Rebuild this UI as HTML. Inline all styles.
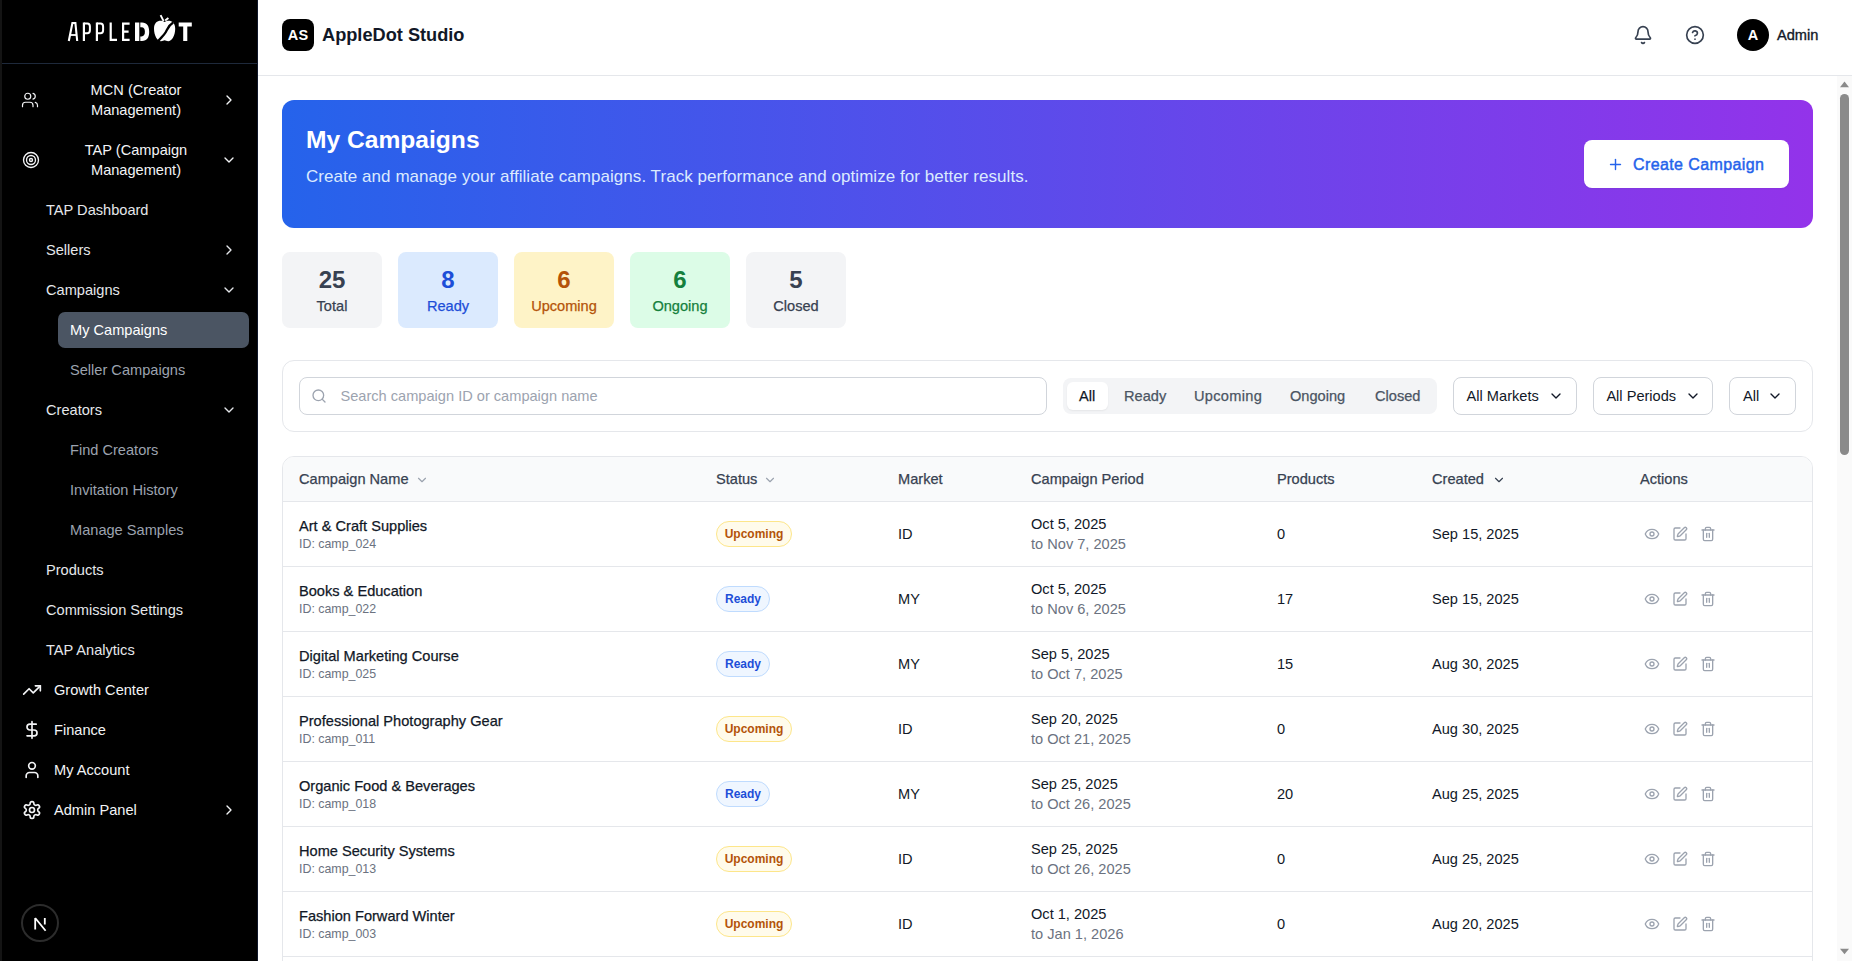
<!DOCTYPE html>
<html><head><meta charset="utf-8">
<style>
*{box-sizing:border-box;margin:0;padding:0}
html,body{width:1852px;height:961px;overflow:hidden;background:#fff;font-family:"Liberation Sans",sans-serif;}
.abs{position:absolute}
#sb{position:absolute;left:0;top:0;width:258px;height:961px;background:#000;border-right:1px solid #0f172a}
#sb .edge{position:absolute;left:0;top:0;width:2px;height:961px;background:#141414}
#sb .logoline{position:absolute;left:2px;top:63px;width:255px;height:1px;background:#1e293b}
.ni{position:absolute;height:40px;line-height:40px;font-size:14.6px;white-space:nowrap}
.l1{color:#f3f4f6}
.l2{color:#e5e7eb}
.l3{color:#9ca3af}
.ic{position:absolute;fill:none;stroke:currentColor;stroke-linecap:round;stroke-linejoin:round}
#hdr{position:absolute;left:258px;top:0;width:1594px;height:76px;background:#fff;border-bottom:1px solid #e5e7eb}
#main{position:absolute;left:258px;top:76px;width:1594px;height:885px;background:#fff}
#scroll{position:absolute;left:1837px;top:76px;width:15px;height:885px;background:#fafafa}

.banner{background:linear-gradient(90deg,#2563eb 0%,#9333ea 100%);border-radius:12px}
.stat{position:absolute;top:252px;width:100px;height:76px;border-radius:8px;text-align:center}
.stat .sn{position:absolute;left:0;width:100px;top:12px;font-size:24px;line-height:32px;font-weight:700}
.stat .sl{position:absolute;left:0;width:100px;top:44px;font-size:14.6px;line-height:20px;-webkit-text-stroke:0.25px currentColor}
.t14{position:absolute;font-size:14.6px;line-height:20px;white-space:nowrap}
.t12{position:absolute;font-size:12.4px;line-height:16px;white-space:nowrap}
.med{-webkit-text-stroke:0.25px currentColor}
.c9{color:#111827}.c7{color:#374151}.c5{color:#6b7280}
.dd{top:377px;height:38px;border:1px solid #d1d5db;border-radius:8px;background:#fff}
.row{position:absolute;left:0;width:1531px;height:65px;border-bottom:1px solid #e5e7eb}
.badge{position:absolute;height:26px;border-radius:13px;font-size:12px;line-height:24px;font-weight:700;text-align:center;white-space:nowrap}
.badge.up{background:#fffbeb;color:#b45309;border:1px solid #fde68a}
.badge.rd{background:#eff6ff;color:#1d4ed8;border:1px solid #bfdbfe}
.ai{color:#9ca3af}
</style></head>
<body>
<div id="sb">
  <div class="edge"></div>
  <svg class="abs" style="left:0;top:0" width="258" height="63" viewBox="0 0 258 63">
    <g stroke="#fff" fill="none" stroke-linecap="butt">
      <path d="M68.8 41 L72.4 23 L75.4 23 L77.2 41" stroke-width="2.1"/>
      <path d="M70.6 35 H76" stroke-width="1.8"/>
      <path d="M83.9 22.5 V41" stroke-width="2.2"/>
      <path d="M83.9 23.6 H87.3 Q89.9 23.6 89.9 26.6 V30.2 Q89.9 33.2 87.3 33.2 H83.9" stroke-width="2"/>
      <path d="M96.9 22.5 V41" stroke-width="2.2"/>
      <path d="M96.9 23.6 H100.5 Q103.1 23.6 103.1 26.6 V30.2 Q103.1 33.2 100.5 33.2 H96.9" stroke-width="2"/>
      <path d="M110.7 22.5 V39.9 H117" stroke-width="2.2"/>
      <path d="M123.1 22.5 V39.9 H129.6 M123.1 23.6 H129.6 M123.1 31.6 H128.6" stroke-width="2.2"/>
    </g>
    <g fill="#fff">
      <path d="M164.6 22 C161 19.6 154 20.2 154 28.8 C154 36 157.6 41.2 161 41.2 C162.6 41.2 163.6 40.3 164.6 40.3 C165.6 40.3 166.6 41.2 168.2 41.2 C171.6 41.2 175.2 36 175.2 28.8 C175.2 20.2 168.2 19.6 164.6 22 Z"/>
      <path d="M135 22.5 H139.3 V41 H135 Z"/><path d="M140.3 22.5 H142 C147 22.5 149.2 26 149.2 31.75 C149.2 37.5 147 41 142 41 H140.3 V36.4 H141.5 C143.9 36.4 144.9 34.5 144.9 31.75 C144.9 29 143.9 27.3 141.5 27.3 H140.3 Z"/>
      <path d="M178.7 22.5 H191.8 V26.6 H187.3 V41 H183.2 V26.6 H178.7 Z"/>
    </g>
    <path d="M160.6 15.2 L163.6 21.2 M165.2 20.6 L168.4 18" stroke="#fff" stroke-width="1.9" fill="none"/>
    <path d="M157.2 42.3 C160 38.5 163.8 35.6 165.7 32.3 C167.6 29 168.2 25.6 173.2 22.6" stroke="#000" stroke-width="2.3" fill="none"/>
  </svg>
  <div class="logoline"></div>

  <svg class="ic l1" style="left:21px;top:91px;color:#f3f4f6" width="18" height="18" viewBox="0 0 24 24" stroke-width="1.6"><path d="M16 21v-2a4 4 0 0 0-4-4H6a4 4 0 0 0-4 4v2"/><circle cx="9" cy="7" r="4"/><path d="M22 21v-2a4 4 0 0 0-3-3.87"/><path d="M16 3.13a4 4 0 0 1 0 7.75"/></svg>
  <div class="abs l1" style="left:46px;top:80px;width:180px;text-align:center;font-size:14.6px;line-height:20px">MCN (Creator<br>Management)</div>
  <svg class="ic l1" style="left:221px;top:92px" width="16" height="16" viewBox="0 0 24 24" stroke-width="2"><path d="m9 18 6-6-6-6"/></svg>

  <svg class="ic l1" style="left:21.6px;top:151px" width="18" height="18" viewBox="0 0 24 24" stroke-width="1.8"><circle cx="12" cy="12" r="10"/><circle cx="12" cy="12" r="6"/><circle cx="12" cy="12" r="2"/></svg>
  <div class="abs l1" style="left:46px;top:140px;width:180px;text-align:center;font-size:14.6px;line-height:20px">TAP (Campaign<br>Management)</div>
  <svg class="ic l1" style="left:221px;top:152px" width="16" height="16" viewBox="0 0 24 24" stroke-width="2"><path d="m6 9 6 6 6-6"/></svg>

  <div class="ni l2" style="left:46px;top:190px">TAP Dashboard</div>
  <div class="ni l2" style="left:46px;top:230px">Sellers</div>
  <svg class="ic l2" style="left:221px;top:242px" width="16" height="16" viewBox="0 0 24 24" stroke-width="2"><path d="m9 18 6-6-6-6"/></svg>
  <div class="ni l2" style="left:46px;top:270px">Campaigns</div>
  <svg class="ic l2" style="left:221px;top:282px" width="16" height="16" viewBox="0 0 24 24" stroke-width="2"><path d="m6 9 6 6 6-6"/></svg>
  <div class="abs" style="left:58px;top:312px;width:191px;height:36px;background:#4b5563;border-radius:7px"></div>
  <div class="ni" style="left:70px;top:310px;color:#fff">My Campaigns</div>
  <div class="ni l3" style="left:70px;top:350px">Seller Campaigns</div>
  <div class="ni l2" style="left:46px;top:390px">Creators</div>
  <svg class="ic l2" style="left:221px;top:402px" width="16" height="16" viewBox="0 0 24 24" stroke-width="2"><path d="m6 9 6 6 6-6"/></svg>
  <div class="ni l3" style="left:70px;top:430px">Find Creators</div>
  <div class="ni l3" style="left:70px;top:470px">Invitation History</div>
  <div class="ni l3" style="left:70px;top:510px">Manage Samples</div>
  <div class="ni l2" style="left:46px;top:550px">Products</div>
  <div class="ni l2" style="left:46px;top:590px">Commission Settings</div>
  <div class="ni l2" style="left:46px;top:630px">TAP Analytics</div>

  <svg class="ic l1" style="left:22px;top:680px" width="20" height="20" viewBox="0 0 24 24" stroke-width="2"><polyline points="22 7 13.5 15.5 8.5 10.5 2 17"/><polyline points="16 7 22 7 22 13"/></svg>
  <div class="ni l1" style="left:54px;top:670px">Growth Center</div>
  <svg class="ic l1" style="left:22px;top:720px" width="20" height="20" viewBox="0 0 24 24" stroke-width="2"><line x1="12" x2="12" y1="2" y2="22"/><path d="M17 5H9.5a3.5 3.5 0 0 0 0 7h5a3.5 3.5 0 0 1 0 7H6"/></svg>
  <div class="ni l1" style="left:54px;top:710px">Finance</div>
  <svg class="ic l1" style="left:22px;top:760px" width="20" height="20" viewBox="0 0 24 24" stroke-width="2"><path d="M19 21v-2a4 4 0 0 0-4-4H9a4 4 0 0 0-4 4v2"/><circle cx="12" cy="7" r="4"/></svg>
  <div class="ni l1" style="left:54px;top:750px">My Account</div>
  <svg class="ic l1" style="left:22px;top:800px" width="20" height="20" viewBox="0 0 24 24" stroke-width="2"><path d="M12.22 2h-.44a2 2 0 0 0-2 2v.18a2 2 0 0 1-1 1.73l-.43.25a2 2 0 0 1-2 0l-.15-.08a2 2 0 0 0-2.730.73l-.22.38a2 2 0 0 0 .73 2.73l.15.1a2 2 0 0 1 1 1.72v.51a2 2 0 0 1-1 1.74l-.15.09a2 2 0 0 0-.73 2.73l.22.38a2 2 0 0 0 2.73.73l.15-.08a2 2 0 0 1 2 0l.43.25a2 2 0 0 1 1 1.73V20a2 2 0 0 0 2 2h.44a2 2 0 0 0 2-2v-.18a2 2 0 0 1 1-1.73l.43-.25a2 2 0 0 1 2 0l.15.08a2 2 0 0 0 2.73-.73l.22-.39a2 2 0 0 0-.73-2.73l-.15-.08a2 2 0 0 1-1-1.74v-.5a2 2 0 0 1 1-1.74l.15-.09a2 2 0 0 0 .73-2.73l-.22-.38a2 2 0 0 0-2.73-.73l-.15.08a2 2 0 0 1-2 0l-.43-.25a2 2 0 0 1-1-1.73V4a2 2 0 0 0-2-2z"/><circle cx="12" cy="12" r="3"/></svg>
  <div class="ni l1" style="left:54px;top:790px">Admin Panel</div>
  <svg class="ic l1" style="left:221px;top:802px" width="16" height="16" viewBox="0 0 24 24" stroke-width="2"><path d="m9 18 6-6-6-6"/></svg>

  <div class="abs" style="left:21px;top:904px;width:38px;height:38px;border-radius:50%;border:2px solid #2c2c2c;background:#000"></div>
  <svg class="abs" style="left:22px;top:904.5px" width="36" height="36" viewBox="0 0 36 36"><path d="M13.2 24.6 V13 M13.2 13 L23.6 25.8 M22.8 13 V19.5" stroke="#fff" stroke-width="1.8" fill="none"/></svg>
</div>
<div id="hdr">
  <div class="abs" style="left:24px;top:19px;width:32px;height:32px;background:#000;border-radius:8px;color:#fff;font-weight:700;font-size:14.5px;line-height:32px;text-align:center;letter-spacing:0.2px">AS</div>
  <div class="abs" style="left:64px;top:19px;height:32px;line-height:32px;font-size:18.2px;font-weight:700;color:#111827;white-space:nowrap">AppleDot Studio</div>
  <svg class="ic" style="left:1375px;top:25px;color:#374151" width="20" height="20" viewBox="0 0 24 24" stroke-width="2"><path d="M10.268 21a2 2 0 0 0 3.464 0"/><path d="M3.262 15.326A1 1 0 0 0 4 17h16a1 1 0 0 0 .74-1.673C19.41 13.956 18 12.499 18 8A6 6 0 0 0 6 8c0 4.499-1.411 5.956-2.738 7.326"/></svg>
  <svg class="ic" style="left:1427px;top:25px;color:#374151" width="20" height="20" viewBox="0 0 24 24" stroke-width="2"><circle cx="12" cy="12" r="10"/><path d="M9.09 9a3 3 0 0 1 5.83 1c0 2-3 3-3 3"/><path d="M12 17h.01"/></svg>
  <div class="abs" style="left:1479px;top:19px;width:32px;height:32px;background:#000;border-radius:50%;color:#fff;font-weight:700;font-size:14.5px;line-height:32px;text-align:center">A</div>
  <div class="abs" style="left:1519px;top:19px;height:32px;line-height:32px;font-size:14.6px;-webkit-text-stroke:0.35px #111827;color:#111827;white-space:nowrap">Admin</div>
</div>
<div id="main"></div>
<div id="content">
  <div class="abs banner" style="left:282px;top:100px;width:1531px;height:128px">
    <div class="abs" style="left:24px;top:23.5px;font-size:24.6px;line-height:32px;font-weight:700;color:#fff;white-space:nowrap">My Campaigns</div>
    <div class="abs" style="left:24px;top:64.7px;font-size:17px;line-height:24px;color:#dbeafe;white-space:nowrap;letter-spacing:0.05px">Create and manage your affiliate campaigns. Track performance and optimize for better results.</div>
    <div class="abs" style="left:1302px;top:40px;width:205px;height:48px;background:#fff;border-radius:8px;box-shadow:0 1px 2px rgba(0,0,0,.05)">
      <svg class="ic" style="left:23.4px;top:15.8px;color:#2563eb" width="17" height="17" viewBox="0 0 24 24" stroke-width="2"><path d="M5 12h14"/><path d="M12 5v14"/></svg>
      <div class="abs" style="left:49px;top:13px;font-size:16px;line-height:24px;-webkit-text-stroke:0.45px #2563eb;letter-spacing:0.4px;color:#2563eb;white-space:nowrap">Create Campaign</div>
    </div>
  </div>

  <div class="stat" style="left:282px;background:#f3f4f6;color:#374151"><div class="sn">25</div><div class="sl">Total</div></div>
  <div class="stat" style="left:398px;background:#dbeafe;color:#1d4ed8"><div class="sn">8</div><div class="sl">Ready</div></div>
  <div class="stat" style="left:514px;background:#fef3c7;color:#b45309"><div class="sn">6</div><div class="sl">Upcoming</div></div>
  <div class="stat" style="left:630px;background:#dcfce7;color:#15803d"><div class="sn">6</div><div class="sl">Ongoing</div></div>
  <div class="stat" style="left:746px;background:#f3f4f6;color:#374151"><div class="sn">5</div><div class="sl">Closed</div></div>

  <div class="abs" style="left:282px;top:360px;width:1531px;height:72px;border:1px solid #e5e7eb;border-radius:12px;background:#fff"></div>
  <div class="abs" style="left:299px;top:377px;width:748px;height:38px;border:1px solid #d1d5db;border-radius:8px;background:#fff"></div>
  <svg class="ic" style="left:310.5px;top:387.5px;color:#9ca3af" width="16" height="16" viewBox="0 0 24 24" stroke-width="2"><circle cx="11" cy="11" r="8"/><path d="m21 21-4.3-4.3"/></svg>
  <div class="abs t14" style="left:340.5px;top:386px;color:#9ca3af">Search campaign ID or campaign name</div>

  <div class="abs" style="left:1063px;top:378px;width:374px;height:36px;background:#f3f4f6;border-radius:8px"></div>
  <div class="abs" style="left:1067px;top:382px;width:41px;height:28px;background:#fff;border-radius:6px;box-shadow:0 1px 2px rgba(0,0,0,.06)"></div>
  <div class="abs t14 med" style="left:1079px;top:386px;color:#111827">All</div>
  <div class="abs t14 med" style="left:1124px;top:386px;color:#4b5563">Ready</div>
  <div class="abs t14 med" style="left:1194px;top:386px;color:#4b5563;letter-spacing:0.3px">Upcoming</div>
  <div class="abs t14 med" style="left:1290px;top:386px;color:#4b5563">Ongoing</div>
  <div class="abs t14 med" style="left:1375px;top:386px;color:#4b5563">Closed</div>

  <div class="abs dd" style="left:1453px;width:124px"></div>
  <div class="abs t14 c9" style="left:1466.6px;top:386px">All Markets</div>
  <svg class="ic" style="left:1548px;top:388px;color:#111827" width="16" height="16" viewBox="0 0 24 24" stroke-width="2"><path d="m6 9 6 6 6-6"/></svg>
  <div class="abs dd" style="left:1593px;width:120px"></div>
  <div class="abs t14 c9" style="left:1606.4px;top:386px">All Periods</div>
  <svg class="ic" style="left:1685px;top:388px;color:#111827" width="16" height="16" viewBox="0 0 24 24" stroke-width="2"><path d="m6 9 6 6 6-6"/></svg>
  <div class="abs dd" style="left:1729px;width:67px"></div>
  <div class="abs t14 c9" style="left:1743px;top:386px">All</div>
  <svg class="ic" style="left:1767px;top:388px;color:#111827" width="16" height="16" viewBox="0 0 24 24" stroke-width="2"><path d="m6 9 6 6 6-6"/></svg>

  <div class="abs" id="tbl" style="left:282px;top:456px;width:1531px;height:600px;border:1px solid #e5e7eb;border-radius:12px;overflow:hidden;background:#fff">
    <div class="abs" style="left:0;top:0;width:1531px;height:45px;background:#f9fafb;border-bottom:1px solid #e5e7eb"></div>
    <div class="abs t14 med c7" style="left:16px;top:11.5px">Campaign Name</div>
    <svg class="ic" style="left:132px;top:15.5px;color:#9ca3af" width="14" height="14" viewBox="0 0 24 24" stroke-width="2"><path d="m6 9 6 6 6-6"/></svg>
    <div class="abs t14 med c7" style="left:433px;top:11.5px">Status</div>
    <svg class="ic" style="left:480px;top:15.5px;color:#9ca3af" width="14" height="14" viewBox="0 0 24 24" stroke-width="2"><path d="m6 9 6 6 6-6"/></svg>
    <div class="abs t14 med c7" style="left:615px;top:11.5px">Market</div>
    <div class="abs t14 med c7" style="left:748px;top:11.5px">Campaign Period</div>
    <div class="abs t14 med c7" style="left:994px;top:11.5px">Products</div>
    <div class="abs t14 med c7" style="left:1149px;top:11.5px">Created</div>
    <svg class="ic" style="left:1209px;top:15.5px;color:#374151" width="14" height="14" viewBox="0 0 24 24" stroke-width="2"><path d="m6 9 6 6 6-6"/></svg>
    <div class="abs t14 med c7" style="left:1357px;top:11.5px">Actions</div>
    <div class="row" style="top:45px">
<div class="t14 med c9" style="left:16px;top:14px">Art &amp; Craft Supplies</div>
<div class="t12 c5" style="left:16px;top:34px">ID: camp_024</div>
<div class="badge up" style="left:433px;top:19px;width:76px">Upcoming</div>
<div class="t14 c9" style="left:615px;top:22px">ID</div>
<div class="t14 c9" style="left:748px;top:12px">Oct 5, 2025</div>
<div class="t14 c5" style="left:748px;top:32px">to Nov 7, 2025</div>
<div class="t14 c9" style="left:994px;top:22px">0</div>
<div class="t14 c9" style="left:1149px;top:22px">Sep 15, 2025</div>
<svg class="ic ai" style="left:1361px;top:24px" width="16" height="16" viewBox="0 0 24 24" stroke-width="2"><path d="M2.062 12.348a1 1 0 0 1 0-.696 10.75 10.75 0 0 1 19.876 0 1 1 0 0 1 0 .696 10.75 10.75 0 0 1-19.876 0"/><circle cx="12" cy="12" r="3"/></svg>
<svg class="ic ai" style="left:1389px;top:24px" width="16" height="16" viewBox="0 0 24 24" stroke-width="2"><path d="M12 3H5a2 2 0 0 0-2 2v14a2 2 0 0 0 2 2h14a2 2 0 0 0 2-2v-7"/><path d="M18.375 2.625a1 1 0 0 1 3 3l-9.013 9.014a2 2 0 0 1-.853.505l-2.873.84a.5.5 0 0 1-.62-.62l.84-2.873a2 2 0 0 1 .506-.852z"/></svg>
<svg class="ic ai" style="left:1417px;top:24px" width="16" height="16" viewBox="0 0 24 24" stroke-width="2"><path d="M3 6h18"/><path d="M19 6v14c0 1-1 2-2 2H7c-1 0-2-1-2-2V6"/><path d="M8 6V4c0-1 1-2 2-2h4c1 0 2 1 2 2v2"/><line x1="10" x2="10" y1="11" y2="17"/><line x1="14" x2="14" y1="11" y2="17"/></svg>
</div><div class="row" style="top:110px">
<div class="t14 med c9" style="left:16px;top:14px">Books &amp; Education</div>
<div class="t12 c5" style="left:16px;top:34px">ID: camp_022</div>
<div class="badge rd" style="left:433px;top:19px;width:54px">Ready</div>
<div class="t14 c9" style="left:615px;top:22px">MY</div>
<div class="t14 c9" style="left:748px;top:12px">Oct 5, 2025</div>
<div class="t14 c5" style="left:748px;top:32px">to Nov 6, 2025</div>
<div class="t14 c9" style="left:994px;top:22px">17</div>
<div class="t14 c9" style="left:1149px;top:22px">Sep 15, 2025</div>
<svg class="ic ai" style="left:1361px;top:24px" width="16" height="16" viewBox="0 0 24 24" stroke-width="2"><path d="M2.062 12.348a1 1 0 0 1 0-.696 10.75 10.75 0 0 1 19.876 0 1 1 0 0 1 0 .696 10.75 10.75 0 0 1-19.876 0"/><circle cx="12" cy="12" r="3"/></svg>
<svg class="ic ai" style="left:1389px;top:24px" width="16" height="16" viewBox="0 0 24 24" stroke-width="2"><path d="M12 3H5a2 2 0 0 0-2 2v14a2 2 0 0 0 2 2h14a2 2 0 0 0 2-2v-7"/><path d="M18.375 2.625a1 1 0 0 1 3 3l-9.013 9.014a2 2 0 0 1-.853.505l-2.873.84a.5.5 0 0 1-.62-.62l.84-2.873a2 2 0 0 1 .506-.852z"/></svg>
<svg class="ic ai" style="left:1417px;top:24px" width="16" height="16" viewBox="0 0 24 24" stroke-width="2"><path d="M3 6h18"/><path d="M19 6v14c0 1-1 2-2 2H7c-1 0-2-1-2-2V6"/><path d="M8 6V4c0-1 1-2 2-2h4c1 0 2 1 2 2v2"/><line x1="10" x2="10" y1="11" y2="17"/><line x1="14" x2="14" y1="11" y2="17"/></svg>
</div><div class="row" style="top:175px">
<div class="t14 med c9" style="left:16px;top:14px">Digital Marketing Course</div>
<div class="t12 c5" style="left:16px;top:34px">ID: camp_025</div>
<div class="badge rd" style="left:433px;top:19px;width:54px">Ready</div>
<div class="t14 c9" style="left:615px;top:22px">MY</div>
<div class="t14 c9" style="left:748px;top:12px">Sep 5, 2025</div>
<div class="t14 c5" style="left:748px;top:32px">to Oct 7, 2025</div>
<div class="t14 c9" style="left:994px;top:22px">15</div>
<div class="t14 c9" style="left:1149px;top:22px">Aug 30, 2025</div>
<svg class="ic ai" style="left:1361px;top:24px" width="16" height="16" viewBox="0 0 24 24" stroke-width="2"><path d="M2.062 12.348a1 1 0 0 1 0-.696 10.75 10.75 0 0 1 19.876 0 1 1 0 0 1 0 .696 10.75 10.75 0 0 1-19.876 0"/><circle cx="12" cy="12" r="3"/></svg>
<svg class="ic ai" style="left:1389px;top:24px" width="16" height="16" viewBox="0 0 24 24" stroke-width="2"><path d="M12 3H5a2 2 0 0 0-2 2v14a2 2 0 0 0 2 2h14a2 2 0 0 0 2-2v-7"/><path d="M18.375 2.625a1 1 0 0 1 3 3l-9.013 9.014a2 2 0 0 1-.853.505l-2.873.84a.5.5 0 0 1-.62-.62l.84-2.873a2 2 0 0 1 .506-.852z"/></svg>
<svg class="ic ai" style="left:1417px;top:24px" width="16" height="16" viewBox="0 0 24 24" stroke-width="2"><path d="M3 6h18"/><path d="M19 6v14c0 1-1 2-2 2H7c-1 0-2-1-2-2V6"/><path d="M8 6V4c0-1 1-2 2-2h4c1 0 2 1 2 2v2"/><line x1="10" x2="10" y1="11" y2="17"/><line x1="14" x2="14" y1="11" y2="17"/></svg>
</div><div class="row" style="top:240px">
<div class="t14 med c9" style="left:16px;top:14px">Professional Photography Gear</div>
<div class="t12 c5" style="left:16px;top:34px">ID: camp_011</div>
<div class="badge up" style="left:433px;top:19px;width:76px">Upcoming</div>
<div class="t14 c9" style="left:615px;top:22px">ID</div>
<div class="t14 c9" style="left:748px;top:12px">Sep 20, 2025</div>
<div class="t14 c5" style="left:748px;top:32px">to Oct 21, 2025</div>
<div class="t14 c9" style="left:994px;top:22px">0</div>
<div class="t14 c9" style="left:1149px;top:22px">Aug 30, 2025</div>
<svg class="ic ai" style="left:1361px;top:24px" width="16" height="16" viewBox="0 0 24 24" stroke-width="2"><path d="M2.062 12.348a1 1 0 0 1 0-.696 10.75 10.75 0 0 1 19.876 0 1 1 0 0 1 0 .696 10.75 10.75 0 0 1-19.876 0"/><circle cx="12" cy="12" r="3"/></svg>
<svg class="ic ai" style="left:1389px;top:24px" width="16" height="16" viewBox="0 0 24 24" stroke-width="2"><path d="M12 3H5a2 2 0 0 0-2 2v14a2 2 0 0 0 2 2h14a2 2 0 0 0 2-2v-7"/><path d="M18.375 2.625a1 1 0 0 1 3 3l-9.013 9.014a2 2 0 0 1-.853.505l-2.873.84a.5.5 0 0 1-.62-.62l.84-2.873a2 2 0 0 1 .506-.852z"/></svg>
<svg class="ic ai" style="left:1417px;top:24px" width="16" height="16" viewBox="0 0 24 24" stroke-width="2"><path d="M3 6h18"/><path d="M19 6v14c0 1-1 2-2 2H7c-1 0-2-1-2-2V6"/><path d="M8 6V4c0-1 1-2 2-2h4c1 0 2 1 2 2v2"/><line x1="10" x2="10" y1="11" y2="17"/><line x1="14" x2="14" y1="11" y2="17"/></svg>
</div><div class="row" style="top:305px">
<div class="t14 med c9" style="left:16px;top:14px">Organic Food &amp; Beverages</div>
<div class="t12 c5" style="left:16px;top:34px">ID: camp_018</div>
<div class="badge rd" style="left:433px;top:19px;width:54px">Ready</div>
<div class="t14 c9" style="left:615px;top:22px">MY</div>
<div class="t14 c9" style="left:748px;top:12px">Sep 25, 2025</div>
<div class="t14 c5" style="left:748px;top:32px">to Oct 26, 2025</div>
<div class="t14 c9" style="left:994px;top:22px">20</div>
<div class="t14 c9" style="left:1149px;top:22px">Aug 25, 2025</div>
<svg class="ic ai" style="left:1361px;top:24px" width="16" height="16" viewBox="0 0 24 24" stroke-width="2"><path d="M2.062 12.348a1 1 0 0 1 0-.696 10.75 10.75 0 0 1 19.876 0 1 1 0 0 1 0 .696 10.75 10.75 0 0 1-19.876 0"/><circle cx="12" cy="12" r="3"/></svg>
<svg class="ic ai" style="left:1389px;top:24px" width="16" height="16" viewBox="0 0 24 24" stroke-width="2"><path d="M12 3H5a2 2 0 0 0-2 2v14a2 2 0 0 0 2 2h14a2 2 0 0 0 2-2v-7"/><path d="M18.375 2.625a1 1 0 0 1 3 3l-9.013 9.014a2 2 0 0 1-.853.505l-2.873.84a.5.5 0 0 1-.62-.62l.84-2.873a2 2 0 0 1 .506-.852z"/></svg>
<svg class="ic ai" style="left:1417px;top:24px" width="16" height="16" viewBox="0 0 24 24" stroke-width="2"><path d="M3 6h18"/><path d="M19 6v14c0 1-1 2-2 2H7c-1 0-2-1-2-2V6"/><path d="M8 6V4c0-1 1-2 2-2h4c1 0 2 1 2 2v2"/><line x1="10" x2="10" y1="11" y2="17"/><line x1="14" x2="14" y1="11" y2="17"/></svg>
</div><div class="row" style="top:370px">
<div class="t14 med c9" style="left:16px;top:14px">Home Security Systems</div>
<div class="t12 c5" style="left:16px;top:34px">ID: camp_013</div>
<div class="badge up" style="left:433px;top:19px;width:76px">Upcoming</div>
<div class="t14 c9" style="left:615px;top:22px">ID</div>
<div class="t14 c9" style="left:748px;top:12px">Sep 25, 2025</div>
<div class="t14 c5" style="left:748px;top:32px">to Oct 26, 2025</div>
<div class="t14 c9" style="left:994px;top:22px">0</div>
<div class="t14 c9" style="left:1149px;top:22px">Aug 25, 2025</div>
<svg class="ic ai" style="left:1361px;top:24px" width="16" height="16" viewBox="0 0 24 24" stroke-width="2"><path d="M2.062 12.348a1 1 0 0 1 0-.696 10.75 10.75 0 0 1 19.876 0 1 1 0 0 1 0 .696 10.75 10.75 0 0 1-19.876 0"/><circle cx="12" cy="12" r="3"/></svg>
<svg class="ic ai" style="left:1389px;top:24px" width="16" height="16" viewBox="0 0 24 24" stroke-width="2"><path d="M12 3H5a2 2 0 0 0-2 2v14a2 2 0 0 0 2 2h14a2 2 0 0 0 2-2v-7"/><path d="M18.375 2.625a1 1 0 0 1 3 3l-9.013 9.014a2 2 0 0 1-.853.505l-2.873.84a.5.5 0 0 1-.62-.62l.84-2.873a2 2 0 0 1 .506-.852z"/></svg>
<svg class="ic ai" style="left:1417px;top:24px" width="16" height="16" viewBox="0 0 24 24" stroke-width="2"><path d="M3 6h18"/><path d="M19 6v14c0 1-1 2-2 2H7c-1 0-2-1-2-2V6"/><path d="M8 6V4c0-1 1-2 2-2h4c1 0 2 1 2 2v2"/><line x1="10" x2="10" y1="11" y2="17"/><line x1="14" x2="14" y1="11" y2="17"/></svg>
</div><div class="row" style="top:435px">
<div class="t14 med c9" style="left:16px;top:14px">Fashion Forward Winter</div>
<div class="t12 c5" style="left:16px;top:34px">ID: camp_003</div>
<div class="badge up" style="left:433px;top:19px;width:76px">Upcoming</div>
<div class="t14 c9" style="left:615px;top:22px">ID</div>
<div class="t14 c9" style="left:748px;top:12px">Oct 1, 2025</div>
<div class="t14 c5" style="left:748px;top:32px">to Jan 1, 2026</div>
<div class="t14 c9" style="left:994px;top:22px">0</div>
<div class="t14 c9" style="left:1149px;top:22px">Aug 20, 2025</div>
<svg class="ic ai" style="left:1361px;top:24px" width="16" height="16" viewBox="0 0 24 24" stroke-width="2"><path d="M2.062 12.348a1 1 0 0 1 0-.696 10.75 10.75 0 0 1 19.876 0 1 1 0 0 1 0 .696 10.75 10.75 0 0 1-19.876 0"/><circle cx="12" cy="12" r="3"/></svg>
<svg class="ic ai" style="left:1389px;top:24px" width="16" height="16" viewBox="0 0 24 24" stroke-width="2"><path d="M12 3H5a2 2 0 0 0-2 2v14a2 2 0 0 0 2 2h14a2 2 0 0 0 2-2v-7"/><path d="M18.375 2.625a1 1 0 0 1 3 3l-9.013 9.014a2 2 0 0 1-.853.505l-2.873.84a.5.5 0 0 1-.62-.62l.84-2.873a2 2 0 0 1 .506-.852z"/></svg>
<svg class="ic ai" style="left:1417px;top:24px" width="16" height="16" viewBox="0 0 24 24" stroke-width="2"><path d="M3 6h18"/><path d="M19 6v14c0 1-1 2-2 2H7c-1 0-2-1-2-2V6"/><path d="M8 6V4c0-1 1-2 2-2h4c1 0 2 1 2 2v2"/><line x1="10" x2="10" y1="11" y2="17"/><line x1="14" x2="14" y1="11" y2="17"/></svg>
</div><div class="row" style="top:500px">
<div class="t14 med c9" style="left:16px;top:14px">Smart Home Devices</div>
<div class="t12 c5" style="left:16px;top:34px">ID: camp_009</div>
<div class="badge rd" style="left:433px;top:19px;width:54px">Ready</div>
<div class="t14 c9" style="left:615px;top:22px">MY</div>
<div class="t14 c9" style="left:748px;top:12px">Oct 1, 2025</div>
<div class="t14 c5" style="left:748px;top:32px">to Nov 1, 2025</div>
<div class="t14 c9" style="left:994px;top:22px">12</div>
<div class="t14 c9" style="left:1149px;top:22px">Aug 20, 2025</div>
<svg class="ic ai" style="left:1361px;top:24px" width="16" height="16" viewBox="0 0 24 24" stroke-width="2"><path d="M2.062 12.348a1 1 0 0 1 0-.696 10.75 10.75 0 0 1 19.876 0 1 1 0 0 1 0 .696 10.75 10.75 0 0 1-19.876 0"/><circle cx="12" cy="12" r="3"/></svg>
<svg class="ic ai" style="left:1389px;top:24px" width="16" height="16" viewBox="0 0 24 24" stroke-width="2"><path d="M12 3H5a2 2 0 0 0-2 2v14a2 2 0 0 0 2 2h14a2 2 0 0 0 2-2v-7"/><path d="M18.375 2.625a1 1 0 0 1 3 3l-9.013 9.014a2 2 0 0 1-.853.505l-2.873.84a.5.5 0 0 1-.62-.62l.84-2.873a2 2 0 0 1 .506-.852z"/></svg>
<svg class="ic ai" style="left:1417px;top:24px" width="16" height="16" viewBox="0 0 24 24" stroke-width="2"><path d="M3 6h18"/><path d="M19 6v14c0 1-1 2-2 2H7c-1 0-2-1-2-2V6"/><path d="M8 6V4c0-1 1-2 2-2h4c1 0 2 1 2 2v2"/><line x1="10" x2="10" y1="11" y2="17"/><line x1="14" x2="14" y1="11" y2="17"/></svg>
</div>
  </div>
</div>
<div id="scroll">
  <svg class="abs" style="left:0;top:0" width="15" height="885" viewBox="0 0 15 885">
    <path d="M3 11.2 L7.5 5.6 L12 11.2 Z" fill="#8a8a8a"/>
    <rect x="3" y="18" width="9" height="361" rx="4.5" fill="#8a8a8a"/>
    <path d="M3 872.7 L7.5 878.2 L12 872.7 Z" fill="#8a8a8a"/>
  </svg>
</div>
</body></html>
